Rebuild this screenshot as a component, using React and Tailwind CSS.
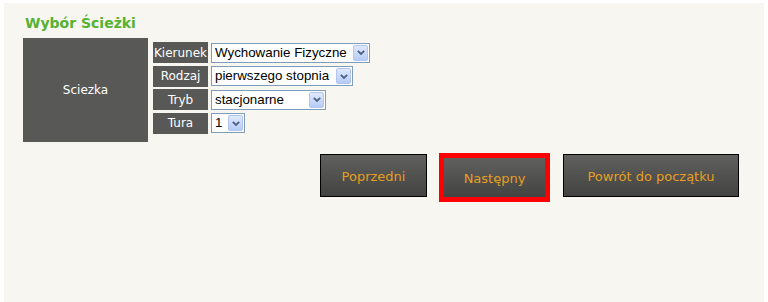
import React from "react";

const sans = { fontFamily: '"DejaVu Sans", Verdana, sans-serif' };
const arial = { fontFamily: '"Liberation Sans", Arial, sans-serif' };

function Select({ value, width }) {
  return (
    <div
      className="flex items-center justify-between h-[20px] bg-white border border-[#7f9db9] pl-[3px] pr-[1px]"
      style={{ width }}
    >
      <span className="text-[13.33px] text-black leading-none whitespace-nowrap" style={arial}>
        {value}
      </span>
      <div className="w-[15px] h-[16px] flex items-center justify-center rounded-[2px] border border-[#b3c5ee] bg-gradient-to-b from-[#dfe9fe] to-[#b6cbf6]">
        <svg width="8" height="5" viewBox="0 0 8 5">
          <path d="M0.8 0.8 L4 4 L7.2 0.8" fill="none" stroke="#4d6185" strokeWidth="1.8" />
        </svg>
      </div>
    </div>
  );
}

function Row({ label, value, width }) {
  return (
    <div className="flex items-center gap-[3px] h-[21px]">
      <div
        className="w-[55px] h-[21px] bg-[#585856] text-white text-[12px] flex items-center justify-center leading-none"
        style={sans}
      >
        {label}
      </div>
      <Select value={value} width={width} />
    </div>
  );
}

function Btn({ children, w, highlight, className = "" }) {
  if (highlight) {
    return (
      <div className={"w-[111px] h-[49px] border-[5px] border-[#ff0000] bg-gradient-to-b from-[#60605e] to-[#434341] flex items-center justify-center pt-[2px] " + className}>
        <span className="text-[13px] text-[#e69f22] leading-none" style={sans}>{children}</span>
      </div>
    );
  }
  return (
    <div
      className={"h-[43px] mt-[1px] border border-black bg-gradient-to-b from-[#60605e] to-[#434341] flex items-center justify-center pt-[2px] " + className}
      style={{ width: w }}
    >
      <span className="text-[13px] text-[#e69f22] leading-none whitespace-nowrap" style={sans}>{children}</span>
    </div>
  );
}

export default function App() {
  return (
    <div className="w-[768px] h-[302px] bg-white pt-[3px] pl-[4px] overflow-hidden">
      <div className="w-[760px] h-[299px] bg-[#f7f6f1] flex flex-col">
        <div
          className="pl-[21px] pt-[12px] text-[14px] leading-[17px] font-bold text-[#56b232]"
          style={sans}
        >
          Wybór Ścieżki
        </div>
        <div className="flex gap-[5px] ml-[19px] mt-[6px]">
          <div
            className="w-[125px] h-[104px] bg-[#585856] text-white text-[12px] flex items-center justify-center"
            style={sans}
          >
            Sciezka
          </div>
          <div className="flex flex-col gap-[2.5px] pt-[4px]">
            <Row label="Kierunek" value="Wychowanie Fizyczne" width={159} />
            <Row label="Rodzaj" value="pierwszego stopnia" width={142} />
            <Row label="Tryb" value="stacjonarne" width={115} />
            <Row label="Tura" value="1" width={34} />
          </div>
        </div>
        <div className="flex justify-end items-start pr-[25px] mt-[11px]">
          <Btn w={107}>Poprzedni</Btn>
          <Btn highlight className="ml-[12px]">Następny</Btn>
          <Btn w={176} className="ml-[13px]">Powrót do początku</Btn>
        </div>
      </div>
    </div>
  );
}
